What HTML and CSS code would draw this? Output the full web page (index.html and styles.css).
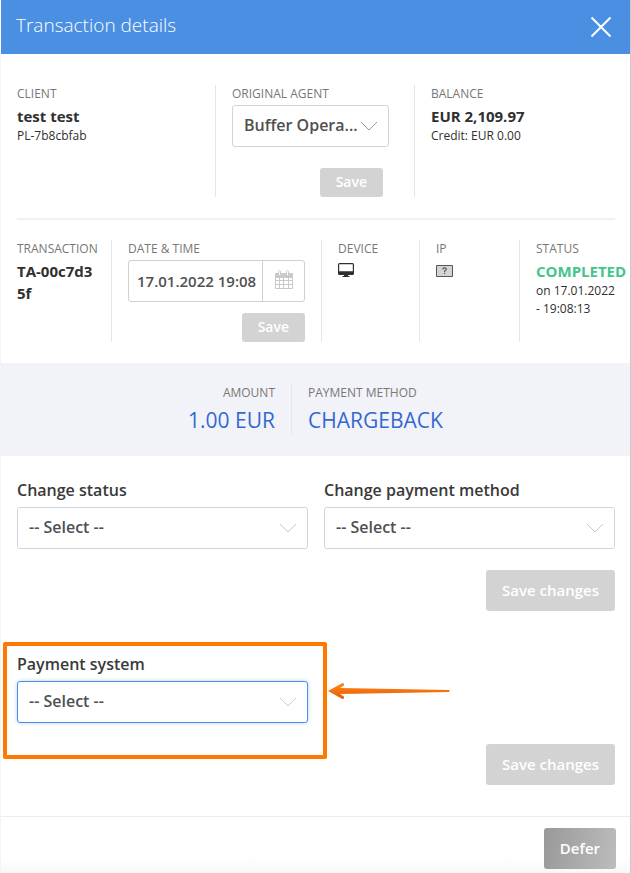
FILE: index.html
```html
<!DOCTYPE html>
<html lang="en">
<head>
<meta charset="utf-8">
<meta name="viewport" content="width=device-width, initial-scale=1">
<title>Transaction details</title>
<link rel="stylesheet" href="styles.css">
</head>
<body>
<main class="panel">
  <header class="panel-header">
    <h1 class="panel-title">Transaction details</h1>
    <button class="close" type="button" aria-label="Close">
      <svg width="22" height="22" viewBox="0 0 22 22" fill="none" stroke="currentColor" stroke-width="2"><path d="M1.5 1.5l19 19M20.5 1.5l-19 19"/></svg>
    </button>
  </header>

  <section class="details">
    <div class="row row-client">
      <div class="cell">
        <h2 class="caption">CLIENT</h2>
        <p class="value">test test</p>
        <p class="note">PL-7b8cbfab</p>
      </div>
      <div class="cell">
        <label class="caption" for="agent">ORIGINAL AGENT</label>
        <div class="select select-agent">
          <select id="agent"><option>Buffer Opera...</option></select>
          <svg class="chevron" width="18" height="10" viewBox="0 0 18 10" fill="none" stroke="currentColor"><path d="M1 1l8 8 8-8"/></svg>
        </div>
        <div class="actions"><button class="btn btn-small" type="button">Save</button></div>
      </div>
      <div class="cell">
        <h2 class="caption">BALANCE</h2>
        <p class="value">EUR 2,109.97</p>
        <p class="note">Credit: EUR 0.00</p>
      </div>
    </div>

    <div class="row row-transaction">
      <div class="cell">
        <h2 class="caption">TRANSACTION</h2>
        <p class="value value-id">TA-00c7d35f</p>
      </div>
      <div class="cell">
        <label class="caption" for="date">DATE &amp; TIME</label>
        <div class="date">
          <input id="date" type="text" value="17.01.2022 19:08">
          <button class="date-button" type="button" aria-label="Open calendar">
            <svg width="18" height="20" viewBox="0 0 18 20">
              <path fill="#c9c9c9" fill-rule="evenodd" d="M1 3h16a1 1 0 0 1 1 1v14a1 1 0 0 1-1 1H1a1 1 0 0 1-1-1V4a1 1 0 0 1 1-1zM1 8v2h3V8zM5 8v2h3V8zM9 8v2h4V8zM14 8v2h3V8zM1 11v3h3v-3zM5 11v3h3v-3zM9 11v3h4v-3zM14 11v3h3v-3zM1 15v3h3v-3zM5 15v3h3v-3zM9 15v3h4v-3zM14 15v3h3v-3z"/>
              <path fill="#fff" stroke="#c9c9c9" d="M3.5 1.5q0-1 1-1t1 1v3q0 1-1 1t-1-1zM11.500 1.500q0-1 1-1t1 1v3q0 1-1 1t-1-1z"/>
            </svg>
          </button>
        </div>
        <div class="actions"><button class="btn btn-small" type="button">Save</button></div>
      </div>
      <div class="cell">
        <h2 class="caption">DEVICE</h2>
        <svg class="icon" width="17" height="15" viewBox="0 0 17 15" role="img" aria-label="Desktop"><path fill="#2f2f2f" fill-rule="evenodd" d="M1.500 0h13a1.500 1.500 0 0 1 1.500 1.500v9a1.500 1.500 0 0 1-1.500 1.500H10v1h1.500v1h-7v-1H6v-1H1.500A1.500 1.500 0 0 1 0 10.500v-9A1.500 1.500 0 0 1 1.500 0zM1.200 1.200v7h13.600v-7z"/></svg>
      </div>
      <div class="cell">
        <h2 class="caption">IP</h2>
        <svg class="icon" width="17" height="15" viewBox="0 0 17 15" role="img" aria-label="Unknown country"><path fill="#d3d3d3" stroke="#555" d="M.5 2.500h16v11H.5z"/><path fill="none" stroke="#555" stroke-width="1.200" d="M6.700 6.300q.2-1.500 1.900-1.500 1.700 0 1.700 1.400 0 .8-1 1.300-.8.400-.8 1.500"/><path fill="#555" d="M7.900 9.800h1.200V11H7.900z"/></svg>
      </div>
      <div class="cell">
        <h2 class="caption">STATUS</h2>
        <p class="value value-status">COMPLETED</p>
        <p class="note">on 17.01.2022 - 19:08:13</p>
      </div>
    </div>
  </section>

  <section class="summary">
    <div class="summary-item summary-amount">
      <h2 class="caption">AMOUNT</h2>
      <p class="total">1.00 EUR</p>
    </div>
    <div class="summary-item">
      <h2 class="caption">PAYMENT METHOD</h2>
      <p class="total">CHARGEBACK</p>
    </div>
  </section>

  <form class="form">
    <div class="fields">
      <div class="field">
        <label for="status">Change status</label>
        <div class="select">
          <select id="status"><option>-- Select --</option></select>
          <svg class="chevron" width="18" height="10" viewBox="0 0 18 10" fill="none" stroke="currentColor"><path d="M1 1l8 8 8-8"/></svg>
        </div>
      </div>
      <div class="field">
        <label for="method">Change payment method</label>
        <div class="select">
          <select id="method"><option>-- Select --</option></select>
          <svg class="chevron" width="18" height="10" viewBox="0 0 18 10" fill="none" stroke="currentColor"><path d="M1 1l8 8 8-8"/></svg>
        </div>
      </div>
    </div>
    <div class="actions"><button class="btn" type="button">Save changes</button></div>
  </form>

  <form class="form form-system">
    <div class="fields">
      <div class="field">
        <label for="system">Payment system</label>
        <div class="select select-active">
          <select id="system"><option>-- Select --</option></select>
          <svg class="chevron" width="18" height="10" viewBox="0 0 18 10" fill="none" stroke="currentColor"><path d="M1 1l8 8 8-8"/></svg>
        </div>
        <div class="highlight"></div>
        <svg class="arrow" width="122" height="18" viewBox="0 0 122 18" aria-hidden="true">
          <defs>
            <linearGradient id="shaft" x1="0" y1="0" x2="0" y2="1"><stop offset="0" stop-color="#ff8a1c"/><stop offset="1" stop-color="#e85a00"/></linearGradient>
          </defs>
          <path fill="url(#shaft)" d="M0 9L14 1.200q1.500-.5 2 .8t-.8 2L12 6l109 2q1.500 1 0 2L12 12l3.200 2q1.300.8.800 2t-2 .8z"/>
        </svg>
      </div>
    </div>
    <div class="actions"><button class="btn" type="button">Save changes</button></div>
  </form>

  <footer class="panel-footer">
    <button class="btn btn-defer" type="button">Defer</button>
  </footer>
</main>
</body>
</html>
```
FILE: styles.css
```css
* {
  box-sizing: border-box;
}

body {
  margin: 0;
  background: #fff;
  color: #2f2f2f;
  font-family: "Open Sans", "Liberation Sans", sans-serif;
  font-size: 12px;
  line-height: 18px;
}

h1, h2, p {
  margin: 0;
}

button, input, select {
  font: inherit;
  margin: 0;
}

.panel {
  min-height: 100vh;
  display: flex;
  flex-direction: column;
  border-left: 1px solid #f4f4f4;
  border-right: 1px solid #cbcbce;
}

.panel-header {
  display: flex;
  align-items: center;
  justify-content: space-between;
  height: 54px;
  margin-left: -1px;
  padding: 0 18px 0 15px;
  background: #4a8fe2;
  border-left: 1px solid #fff;
  color: #fff;
}

.panel-title {
  font-size: 19px;
  font-weight: 300;
  line-height: 24px;
  padding-bottom: 4px;
}

.close {
  display: flex;
  padding: 0;
  border: 0;
  background: none;
  color: inherit;
}

.details {
  padding: 31px 15px 21px 16px;
}

.row {
  display: grid;
}

.row-client {
  grid-template-columns: 198fr 199fr 201fr;
  min-height: 112px;
}

.row-transaction {
  grid-template-columns: 94fr 210fr 98fr 100fr 96fr;
  min-height: 102px;
}

.row-client::after {
  content: "";
  grid-column: 1 / -1;
  height: 2px;
  margin: 21px 0 20px;
  background: #f1f1f1;
}

.cell {
  min-width: 0;
  padding: 0 16px;
  border-left: 1px solid #e6e6e8;
}

.cell:first-child {
  padding-left: 0;
  border-left: 0;
}

.cell:last-child {
  padding-right: 0;
}

.caption {
  display: block;
  color: #777;
  font-size: 12px;
  font-weight: 400;
  line-height: 18px;
  white-space: nowrap;
}

.value {
  padding-top: 2px;
  font-size: 15px;
  font-weight: 700;
  line-height: 22px;
}

.value-id {
  word-break: break-all;
}

.value-status {
  color: #45c48c;
}

.note {
  font-size: 12px;
  line-height: 18px;
}

.icon {
  display: block;
  margin-top: 5px;
}

.select {
  display: grid;
  align-items: center;
  color: #c9c9c9;
}

.select select,
.select .chevron {
  grid-area: 1 / 1;
}

.select select {
  appearance: none;
  width: 100%;
  height: 42px;
  padding: 0 30px 3px 11px;
  border: 1px solid #d0d4de;
  border-radius: 3px;
  background: #fff;
  color: #505050;
  font-size: 16px;
  font-weight: 600;
}

.select .chevron {
  justify-self: end;
  margin-right: 11px;
  pointer-events: none;
}

.select-agent {
  width: 157px;
  margin-top: 2px;
  color: #999;
}

.select-agent + .actions {
  width: 151px;
  margin-top: 21px;
}

.select-active select {
  border-color: #4a8fe2;
  box-shadow: 0 0 4px #b8d4f5;
}

.date {
  display: flex;
  height: 42px;
  margin-top: 2px;
  border: 1px solid #d0d0d0;
  border-radius: 3px;
}

.date input {
  flex: 1;
  min-width: 0;
  padding: 0 0 0 8px;
  border: 0;
  background: none;
  color: #505050;
  font-size: 15px;
  font-weight: 600;
}

.date-button {
  display: flex;
  align-items: center;
  justify-content: center;
  width: 42px;
  padding: 0 0 2px;
  border: 0;
  border-left: 1px solid #d0d0d0;
  background: none;
}

.date + .actions {
  margin-top: 11px;
}

.actions {
  display: flex;
  justify-content: flex-end;
}

.btn {
  height: 41px;
  padding: 0 16px 1px;
  border: 0;
  border-radius: 3px;
  background: #d3d3d3;
  color: #fff;
  font-size: 15px;
  font-weight: 600;
}

.btn-small {
  height: 29px;
  font-size: 14px;
}

.summary {
  display: grid;
  grid-template-columns: 291fr 338fr;
  padding: 21px 0;
  background: #f2f3f8;
}

.summary-item {
  padding: 0 16px;
}

.summary-amount {
  border-right: 1px solid #e6e7ea;
  text-align: right;
}

.total {
  padding-top: 4px;
  color: #3468d2;
  font-size: 21px;
  line-height: 29px;
}

.form {
  padding: 23px 15px 0 16px;
}

.form-system {
  padding: 42px 15px 31px 16px;
}

.fields {
  display: grid;
  grid-template-columns: 1fr 1fr;
  gap: 16px;
}

.field {
  position: relative;
}

.field label {
  display: block;
  padding-bottom: 6px;
  color: #3a3a3a;
  font-size: 16px;
  font-weight: 600;
  line-height: 22px;
}

.form .actions {
  margin-top: 21px;
}

.highlight {
  position: absolute;
  inset: -11px -19px -36px -14px;
  border: 4px solid #ff7800;
  border-radius: 2px;
  pointer-events: none;
}

.arrow {
  position: absolute;
  left: calc(100% + 20px);
  bottom: 23px;
}

.panel-footer {
  display: flex;
  flex: 1;
  align-items: flex-start;
  justify-content: flex-end;
  padding: 11px 14px 4px;
  border-top: 1px solid #ececec;
  background: linear-gradient(#fff 70%, #f8f8f8);
}

.btn-defer {
  background: linear-gradient(100deg, #999, #bcbcbc);
}
```
